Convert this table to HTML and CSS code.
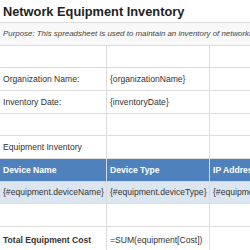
FILE: index.html
```html
<!DOCTYPE html>
<html>
<head>
<meta charset="utf-8">
<link rel="stylesheet" href="styles.css">
</head>
<body>
<table class="sheet">
  <colgroup>
    <col class="c1"><col class="c2"><col class="c3">
  </colgroup>
  <tr class="title-row"><td colspan="3" class="title">Network Equipment Inventory</td></tr>
  <tr class="purpose-row"><td colspan="3" class="purpose">Purpose: This spreadsheet is used to maintain an inventory of networking equipment for the organization.</td></tr>
  <tr><td></td><td></td><td></td></tr>
  <tr><td>Organization Name:</td><td>{organizationName}</td><td></td></tr>
  <tr><td>Inventory Date:</td><td>{inventoryDate}</td><td></td></tr>
  <tr><td></td><td></td><td></td></tr>
  <tr><td>Equipment Inventory</td><td></td><td></td></tr>
  <tr class="head"><td>Device Name</td><td>Device Type</td><td>IP Address</td></tr>
  <tr class="data"><td>{#equipment.deviceName}</td><td>{#equipment.deviceType}</td><td>{#equipment.ipAddress}</td></tr>
  <tr><td></td><td></td><td></td></tr>
  <tr class="total"><td class="strong">Total Equipment Cost</td><td>=SUM(equipment[Cost])</td><td></td></tr>
</table>
</body>
</html>
```
FILE: styles.css
```css
html, body {
  margin: 0;
  padding: 0;
  overflow: hidden;
  background: #ffffff;
}

.sheet {
  border-collapse: collapse;
  table-layout: fixed;
  width: 360px;
  margin: -1px 0 0 -1px;
  font-family: "Liberation Sans", Arial, sans-serif;
  font-size: 8.6px;
  color: #333333;
}

.c1 { width: 107px; }
.c2 { width: 103px; }
.c3 { width: 150px; }

.sheet td {
  border: 1px solid #dcdcdc;
  padding: 0 3px;
  height: 21.67px;
  white-space: nowrap;
  overflow: hidden;
  vertical-align: middle;
}

.sheet .title {
  font-size: 12.8px;
  font-weight: bold;
  color: #222222;
  height: 22px;
  padding-left: 3px;
}

.sheet .purpose {
  font-style: italic;
  font-size: 7.9px;
  color: #444444;
  background: #f8f8f8;
}

.head td {
  background: #4f81bd;
  color: #ffffff;
  font-weight: bold;
  border-color: #d0d8e4;
}

.data td {
  background: #dce6f1;
}

.total td {
  height: 27px;
}

.strong {
  font-weight: bold;
}
```
